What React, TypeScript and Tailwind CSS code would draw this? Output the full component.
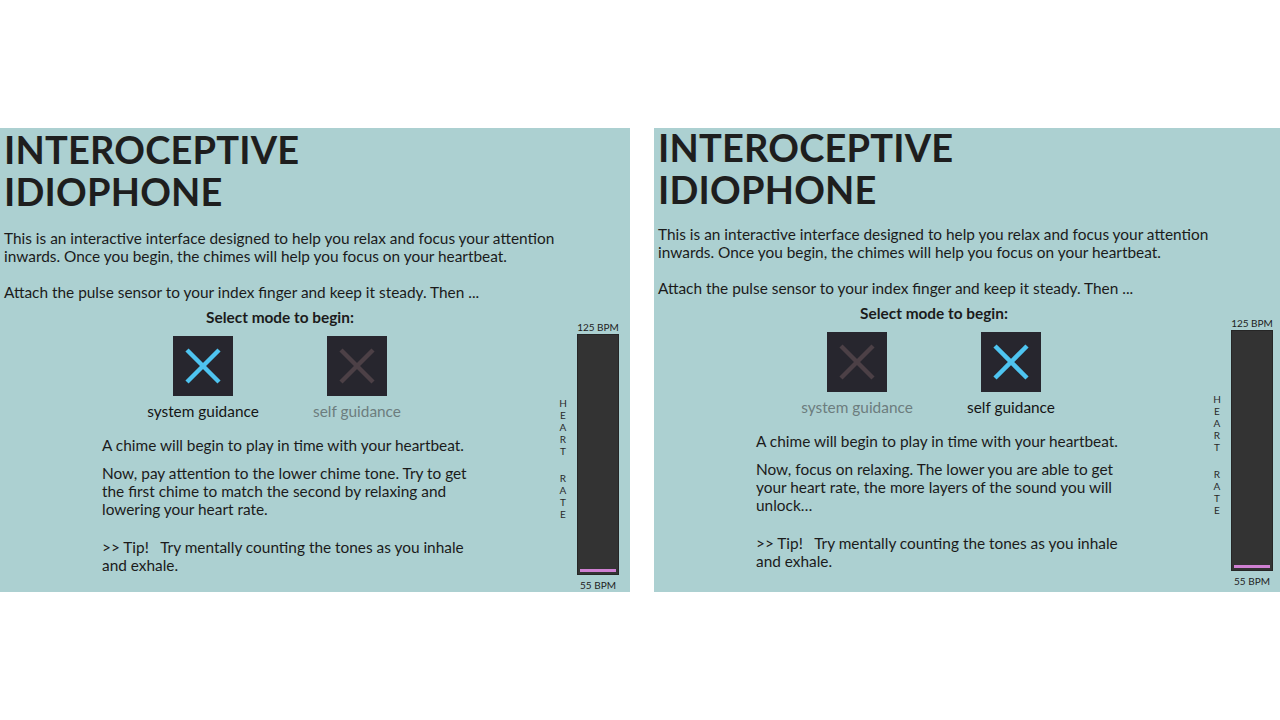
import type { ReactNode } from 'react';

type Mode = 'system' | 'self';

const FONT = { fontFamily: 'Lato, "Open Sans", sans-serif' };

function XIcon({ active }: { active: boolean }) {
  const color = active ? '#4ec4f0' : '#4c4046';
  return (
    <svg width="60" height="60" viewBox="0 0 60 60" className="block">
      <rect width="60" height="60" fill="#27262e" />
      <line x1="14" y1="14" x2="46" y2="46" stroke={color} strokeWidth="4.5" />
      <line x1="46" y1="14" x2="14" y2="46" stroke={color} strokeWidth="4.5" />
    </svg>
  );
}

function ModeOption({ label, active }: { label: string; active: boolean }) {
  return (
    <div className="w-[120px] flex flex-col items-center">
      <XIcon active={active} />
      <span className={`mt-[6px] text-[15.4px] leading-[18px] whitespace-nowrap ${active ? 'text-[#151515]' : 'text-[#6c7d7e]'}`}>
        {label}
      </span>
    </div>
  );
}

function HeartRate() {
  const top = ['H', 'E', 'A', 'R', 'T'];
  const bottom = ['R', 'A', 'T', 'E'];
  return (
    <div className="flex">
      <div className="w-[14px] flex flex-col items-center justify-center pt-[18px] text-[10px] leading-[12px] text-[#2a2a2a]">
        {top.map((c, i) => <span key={'t' + i}>{c}</span>)}
        <span className="h-[15px]" />
        {bottom.map((c, i) => <span key={'b' + i}>{c}</span>)}
      </div>
      <div className="ml-[7px] w-[42px] flex flex-col items-center mt-[13px]">
        <span className="text-[10px] leading-[12px] whitespace-nowrap text-[#222]">125 BPM</span>
        <div className="mt-[1px] w-[42px] h-[241px] bg-[#333333] border border-[#262626] flex flex-col justify-end px-[2px] pb-[2px]">
          <div className="h-[3px] bg-[#cf80d2]" />
        </div>
        <span className="mt-[4px] text-[10px] leading-[12px] whitespace-nowrap text-[#222]">55 BPM</span>
      </div>
    </div>
  );
}

function Panel({ mode, lift, children }: { mode: Mode; lift?: boolean; children: ReactNode }) {
  return (
    <div className="w-[630px] h-[464px] shrink-0 bg-[#acd0d1] text-[#1b1b1b]" style={FONT}>
      <div className="pl-[4px]">
        <h1 className={`${lift ? '-mt-[2px]' : ''} text-[38px] leading-[42px] font-bold tracking-[0.2px] text-[#1e1e1e]`}>
          INTEROCEPTIVE
          <br />
          IDIOPHONE
        </h1>
        <p className={`${lift ? 'mt-[15px]' : 'mt-[17px]'} text-[15.4px] leading-[18px]`}>
          This is an interactive interface designed to help you relax and focus your attention
          <br />
          inwards. Once you begin, the chimes will help you focus on your heartbeat.
        </p>
        <p className="mt-[18px] text-[15.4px] leading-[18px]">
          Attach the pulse sensor to your index finger and keep it steady. Then ...
        </p>
        <div className="mt-[7px] flex">
          <div className="w-[552px] flex flex-col">
            <div className="text-center text-[15.4px] leading-[18px] font-bold">Select mode to begin:</div>
            <div className="mt-[10px] flex justify-center gap-[34px]">
              <ModeOption label="system guidance" active={mode === 'system'} />
              <ModeOption label="self guidance" active={mode === 'self'} />
            </div>
            <div className="pl-[98px] mt-[16px] text-[15.4px] leading-[18px]">{children}</div>
          </div>
          <HeartRate />
        </div>
      </div>
    </div>
  );
}

function Tip() {
  return (
    <p className="mt-[20px] whitespace-pre">
      {'>> Tip!   Try mentally counting the tones as you inhale'}
      <br />
      and exhale.
    </p>
  );
}

export default function App() {
  return (
    <div className="w-[1280px] h-[720px] bg-white overflow-hidden">
      <div className="pt-[128px] flex gap-[24px]">
        <Panel mode="system">
          <p>A chime will begin to play in time with your heartbeat.</p>
          <p className="mt-[10px]">
            Now, pay attention to the lower chime tone. Try to get
            <br />
            the first chime to match the second by relaxing and
            <br />
            lowering your heart rate.
          </p>
          <Tip />
        </Panel>
        <Panel mode="self" lift>
          <p>A chime will begin to play in time with your heartbeat.</p>
          <p className="mt-[10px]">
            Now, focus on relaxing. The lower you are able to get
            <br />
            your heart rate, the more layers of the sound you will
            <br />
            unlock…
          </p>
          <Tip />
        </Panel>
      </div>
    </div>
  );
}
